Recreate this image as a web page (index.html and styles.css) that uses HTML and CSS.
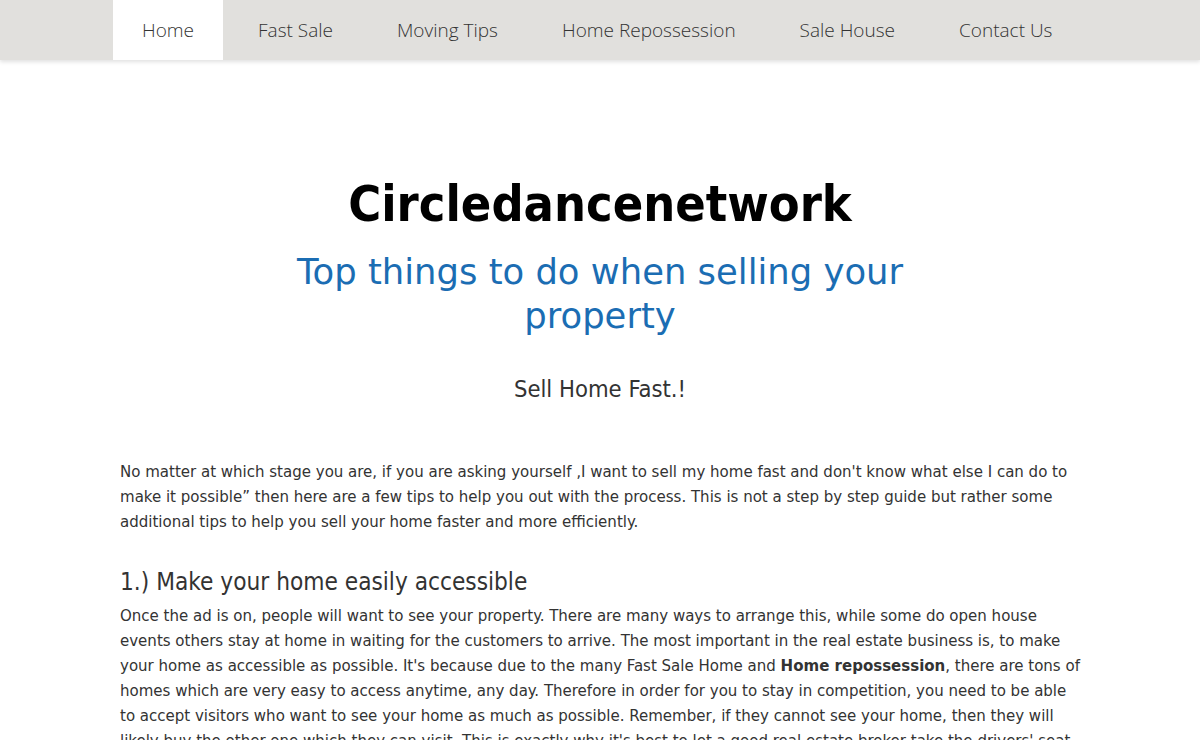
FILE: index.html
```html
<!DOCTYPE html>
<html lang="en">
<head>
<meta charset="utf-8">
<title>Circledancenetwork</title>
<link rel="stylesheet" href="styles.css">
</head>
<body>
<header class="topbar">
  <nav class="nav">
    <a class="nav-item active" href="#">Home</a>
    <a class="nav-item" href="#">Fast Sale</a>
    <a class="nav-item" href="#">Moving Tips</a>
    <a class="nav-item" href="#">Home Repossession</a>
    <a class="nav-item" href="#">Sale House</a>
    <a class="nav-item" href="#">Contact Us</a>
  </nav>
</header>
<main class="content">
  <div class="hero">
    <h1 class="site-title">Circledancenetwork</h1>
    <h2 class="subtitle">Top things to do when selling your property</h2>
    <p class="tagline">Sell Home Fast.!</p>
  </div>
  <p class="text">No matter at which stage you are, if you are asking yourself ‚I want to sell my home fast and don't know what else I can do to make it possible” then here are a few tips to help you out with the process. This is not a step by step guide but rather some additional tips to help you sell your home faster and more efficiently.</p>
  <h3 class="section-title">1.) Make your home easily accessible</h3>
  <p class="text tight">Once the ad is on, people will want to see your property. There are many ways to arrange this, while some do open house events others stay at home in waiting for the customers to arrive. The most important in the real estate business is, to make your home as accessible as possible. It's because due to the many Fast Sale Home and <strong>Home repossession</strong>, there are tons of homes which are very easy to access anytime, any day. Therefore in order for you to stay in competition, you need to be able to accept visitors who want to see your home as much as possible. Remember, if they cannot see your home, then they will likely buy the other one which they can visit. This is exactly why it's best to let a good real estate broker take the drivers' seat and show your home to potential buyers whenever they wish.</p>
</main>
</body>
</html>
```
FILE: styles.css
```css
html, body {
  margin: 0;
  padding: 0;
  background: #ffffff;
}
body {
  font-family: "DejaVu Sans Condensed", "DejaVu Sans", sans-serif;
  color: #333333;
}
.topbar {
  background: #e1e0dd;
  height: 60px;
  box-shadow: 0 2px 4px rgba(0,0,0,0.12);
}
.nav {
  width: 974px;
  margin: 0 auto;
  display: flex;
  gap: 6px;
  height: 60px;
}
.nav-item {
  display: flex;
  flex-shrink: 0;
  align-items: center;
  padding: 0 29px;
  white-space: nowrap;
  font-family: "Open Sans", sans-serif;
  font-weight: 300;
  font-size: 19px;
  color: #333;
  text-decoration: none;
}
.nav-item.active {
  background: #ffffff;
}
.content {
  width: 960px;
  margin: 0 auto;
}
.hero {
  text-align: center;
  padding-top: 112px;
}
.site-title {
  margin: 0;
  font-family: "DejaVu Sans Condensed", "DejaVu Sans", sans-serif;
  font-weight: bold;
  font-size: 50px;
  line-height: 64px;
  color: #000;
}
.subtitle {
  margin: 14px auto 0;
  max-width: 660px;
  font-family: "DejaVu Sans", sans-serif;
  font-weight: normal;
  font-size: 35.4px;
  line-height: 44px;
  color: #1b6db3;
}
.tagline {
  margin: 36px 0 0;
  font-size: 23.6px;
  line-height: 30px;
}
.text {
  margin: 55px 0 0;
  font-size: 16.7px;
  line-height: 25px;
}
.section-title {
  margin: 32px 0 0;
  font-weight: normal;
  font-size: 24.2px;
  line-height: 32px;
}
.text.tight {
  margin-top: 5px;
}
```
